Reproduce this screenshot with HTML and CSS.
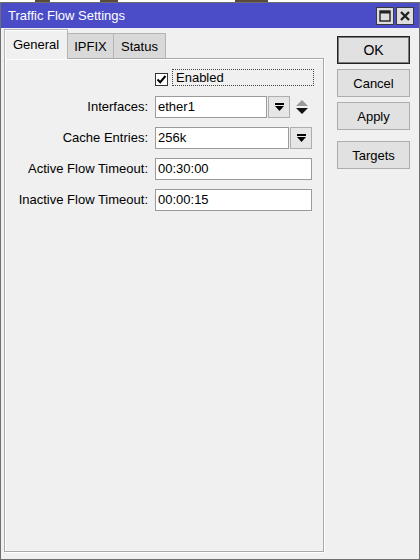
FILE: index.html
```html
<!DOCTYPE html>
<html>
<head>
<meta charset="utf-8">
<link rel="stylesheet" href="styles.css">
</head>
<body>
<div class="desk"><span class="mark m1"></span><span class="mark m2"></span><span class="mark m3"></span></div>
<div class="window">
  <div class="titlebar">
    <span class="title">Traffic Flow Settings</span>
    <div class="tbtns">
      <span class="tbtn"><svg width="12" height="12" viewBox="0 0 12 12"><rect x="1" y="1" width="10" height="10" fill="none" stroke="#222" stroke-width="1.4"/><rect x="1" y="1" width="10" height="2.5" fill="#222"/></svg></span>
      <span class="tbtn"><svg width="12" height="12" viewBox="0 0 12 12"><path d="M2 2 L10 10 M10 2 L2 10" stroke="#222" stroke-width="2.4"/></svg></span>
    </div>
  </div>
  <div class="body">
    <div class="main">
      <div class="tabs">
        <div class="tab active t1">General</div>
        <div class="tab t2">IPFIX</div>
        <div class="tab t3">Status</div>
      </div>
      <div class="panel">
        <div class="check-row">
          <span class="checkbox"><svg width="11" height="11" viewBox="0 0 11 11"><path d="M1.5 5.5 L4.2 8.2 L9.5 2" fill="none" stroke="#000" stroke-width="2"/></svg></span>
          <span class="focus">Enabled</span>
        </div>
        <div class="form">
          <label class="lbl">Interfaces:</label>
          <div class="frow">
            <span class="field w-if">ether1</span>
            <span class="dd"><svg width="9" height="8" viewBox="0 0 9 8"><rect x="0" y="0" width="9" height="2" fill="#000"/><polygon points="0,3 9,3 4.5,8" fill="#000"/></svg></span>
            <span class="updown"><svg width="12" height="17" viewBox="0 0 12 17"><polygon points="6,1 12,7 0,7" fill="#9a9a9a"/><polygon points="0,9 12,9 6,15" fill="#111"/></svg></span>
          </div>
          <label class="lbl">Cache Entries:</label>
          <div class="frow">
            <span class="field w-cache">256k</span>
            <span class="dd"><svg width="9" height="8" viewBox="0 0 9 8"><rect x="0" y="0" width="9" height="2" fill="#000"/><polygon points="0,3 9,3 4.5,8" fill="#000"/></svg></span>
          </div>
          <label class="lbl">Active Flow Timeout:</label>
          <div class="frow"><span class="field w-full">00:30:00</span></div>
          <label class="lbl">Inactive Flow Timeout:</label>
          <div class="frow"><span class="field w-full">00:00:15</span></div>
        </div>
      </div>
    </div>
    <div class="side">
      <div class="btn def">OK</div>
      <div class="btn">Cancel</div>
      <div class="btn">Apply</div>
      <div class="btn targets">Targets</div>
    </div>
  </div>
</div>
</body>
</html>
```
FILE: styles.css
```css
* { box-sizing: border-box; }
body {
  margin: 0;
  background: #fff;
  font-family: "Liberation Sans", Arial, sans-serif;
  font-size: 13px;
  color: #000;
}
.desk { height: 2px; display: flex; }
.mark { height: 2px; background: #5a4a3a; }
.m1 { width: 15px; margin-left: 35px; }
.m2 { width: 18px; margin-left: 50px; }
.m3 { width: 33px; margin-left: 117px; }

.window {
  height: 558px;
  border: 1px solid #6e6e6e;
  background: #f0f0f0;
  display: flex;
  flex-direction: column;
}
.titlebar {
  height: 25px;
  background: #4b4dc8;
  color: #fff;
  display: flex;
  align-items: center;
  padding: 0 5px 0 7px;
}
.title { flex: 1; }
.tbtns { display: flex; gap: 2px; }
.tbtn {
  width: 18px; height: 18px;
  border: 1px solid #3a3a3a;
  background: #dedede;
  display: flex; align-items: center; justify-content: center;
}

.body { flex: 1; display: flex; padding: 1px 0 0 3px; }
.main { width: 320px; display: flex; flex-direction: column; }
.tabs {
  display: flex;
  align-items: flex-end;
  height: 30px;
  margin-bottom: -1px;
  position: relative;
  z-index: 1;
}
.tab {
  height: 25px;
  margin-bottom: 1px;
  border: 1px solid #b4b4b4;
  border-bottom: none;
  background: #d9d9d9;
  display: flex; align-items: center; justify-content: center;
}
.tab.active { height: 30px; margin-bottom: 0; background: #f0f0f0; box-shadow: inset 1px 1px 0 #fff; }
.t1 { width: 64px; }
.t2 { width: 46px; border-left: none; }
.t3 { width: 52px; border-left: none; }

.panel {
  height: 494px;
  border: 1px solid #a9a9a9;
  box-shadow: 1px 1px 0 #fff, inset 1px 1px 0 #fff;
  background: #f0f0f0;
  padding-top: 10px;
}
.check-row { display: flex; height: 17px; margin-left: 150px; }
.checkbox {
  width: 13px; height: 13px;
  margin-top: 4px;
  border: 1px solid #333;
  background: #fff;
  display: flex; align-items: center; justify-content: center;
}
.focus {
  width: 142px; height: 17px;
  margin-left: 4px;
  border: 1px dotted #444;
  padding-left: 3px;
  line-height: 15px;
}
.form {
  display: grid;
  grid-template-columns: 143px 158px;
  column-gap: 7px;
  row-gap: 9px;
  margin-top: 10px;
}
.lbl { text-align: right; line-height: 22px; height: 22px; }
.frow { display: flex; align-items: center; gap: 1px; height: 22px; }
.field {
  height: 22px;
  border: 1px solid #9a9a9a;
  background: #fff;
  padding-left: 2px;
  line-height: 20px;
}
.w-if { width: 112px; }
.w-cache { width: 134px; }
.w-full { width: 157px; }
.dd {
  width: 22px; height: 22px;
  border: 1px solid #adadad;
  background: #e6e6e6;
  display: flex; align-items: center; justify-content: center;
}
.updown { display: flex; margin-left: 5px; }

.side {
  width: 73px;
  margin: 7px 0 0 13px;
  display: flex;
  flex-direction: column;
  gap: 5px;
}
.btn {
  height: 28px;
  border: 1px solid #adadad;
  background: #e1e1e1;
  display: flex; align-items: center; justify-content: center;
}
.btn.def { border-color: #222; box-shadow: inset 0 0 0 1px #7a7a7a; font-size: 14px; }
.btn.targets { margin-top: 6px; }
```
